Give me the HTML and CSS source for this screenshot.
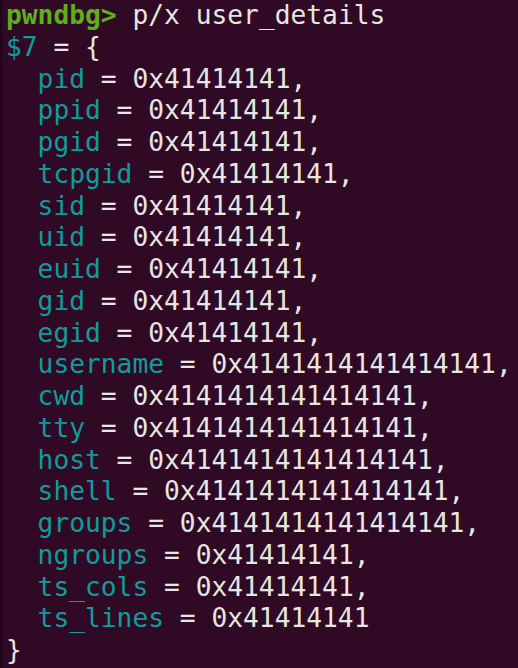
FILE: index.html
```html
<!DOCTYPE html>
<html>
<head>
<meta charset="utf-8">
<link rel="stylesheet" href="styles.css">
</head>
<body>
<div class="term">
  <div class="ln"><span class="prompt">pwndbg&gt;</span> p/x user_details</div>
  <div class="ln"><span class="c">$7</span> = {</div>
  <div class="ln in"><span class="c">pid</span> = 0x41414141,</div>
  <div class="ln in"><span class="c">ppid</span> = 0x41414141,</div>
  <div class="ln in"><span class="c">pgid</span> = 0x41414141,</div>
  <div class="ln in"><span class="c">tcpgid</span> = 0x41414141,</div>
  <div class="ln in"><span class="c">sid</span> = 0x41414141,</div>
  <div class="ln in"><span class="c">uid</span> = 0x41414141,</div>
  <div class="ln in"><span class="c">euid</span> = 0x41414141,</div>
  <div class="ln in"><span class="c">gid</span> = 0x41414141,</div>
  <div class="ln in"><span class="c">egid</span> = 0x41414141,</div>
  <div class="ln in"><span class="c">username</span> = 0x4141414141414141,</div>
  <div class="ln in"><span class="c">cwd</span> = 0x4141414141414141,</div>
  <div class="ln in"><span class="c">tty</span> = 0x4141414141414141,</div>
  <div class="ln in"><span class="c">host</span> = 0x4141414141414141,</div>
  <div class="ln in"><span class="c">shell</span> = 0x4141414141414141,</div>
  <div class="ln in"><span class="c">groups</span> = 0x4141414141414141,</div>
  <div class="ln in"><span class="c">ngroups</span> = 0x41414141,</div>
  <div class="ln in"><span class="c">ts_cols</span> = 0x41414141,</div>
  <div class="ln in"><span class="c">ts_lines</span> = 0x41414141</div>
  <div class="ln">}</div>
</div>
</body>
</html>
```
FILE: styles.css
```css
html, body {
  margin: 0;
  padding: 0;
  background: #300a24;
  height: 100%;
}
.term {
  height: 668px;
  border-left: 2px solid #1f0618;
  box-sizing: border-box;
  padding-left: 4px;
  overflow: hidden;
  font-family: "DejaVu Sans Mono", monospace;
  font-size: 26.25px;
  line-height: 31.75px;
  color: #e6e6e2;
}
.ln {
  white-space: pre;
  height: 31.75px;
}
.in {
  padding-left: 2ch;
}
.prompt {
  color: #5fae1e;
  font-weight: bold;
}
.c {
  color: #0e9c9c;
}
```
